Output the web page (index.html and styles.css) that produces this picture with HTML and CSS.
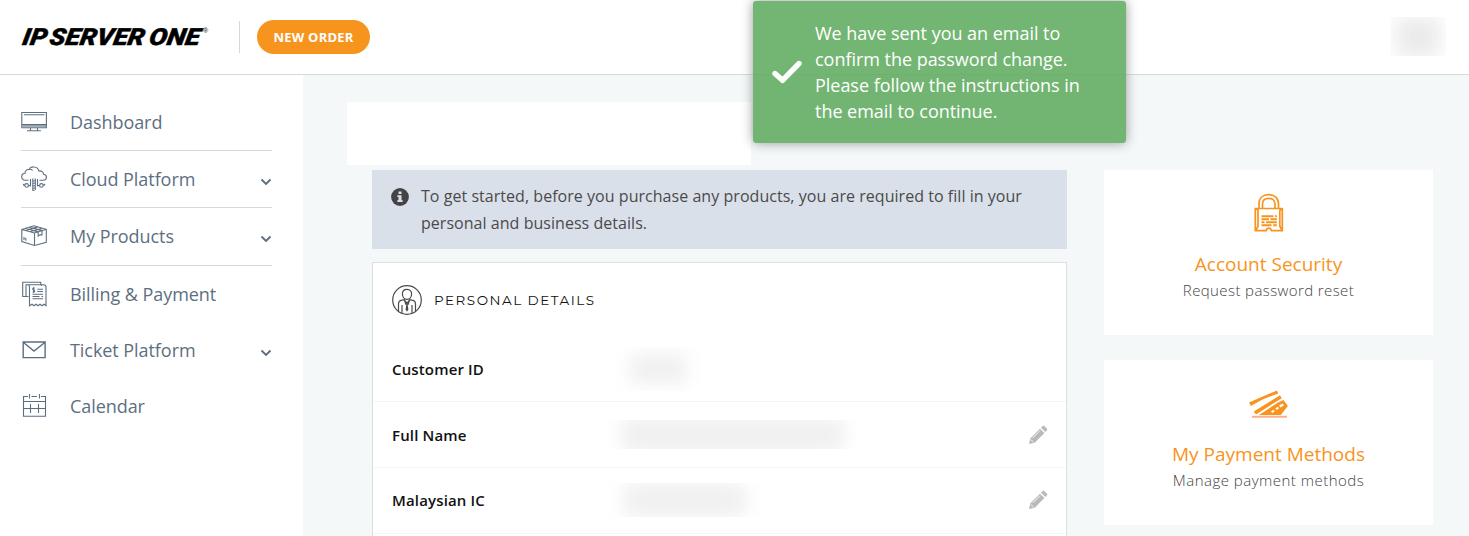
FILE: index.html
```html
<!DOCTYPE html>
<html lang="en">
<head>
<meta charset="utf-8">
<title>IP ServerOne - Profile</title>
<link rel="stylesheet" href="styles.css">
</head>
<body>
<header class="topbar">
  <svg class="logo" width="190" height="24" viewBox="0 0 190 24" aria-label="IP ServerOne">
    <g class="logo-text" transform="translate(0 19.700) skewX(-10)">
      <text x="1.500" y="0" textLength="24.500" lengthAdjust="spacingAndGlyphs">IP</text>
      <text x="28.500" y="0" textLength="95" lengthAdjust="spacingAndGlyphs">SERVER</text>
      <text x="128" y="0" textLength="51" lengthAdjust="spacingAndGlyphs">ONE</text>
    </g>
    <text class="logo-mark" x="183" y="7.500">®</text>
  </svg>
  <a class="new-order"><span>NEW ORDER</span></a>
  <div class="redacted redacted-user"><i></i></div>
</header>
<div class="layout">
  <nav class="sidebar">
    <a class="nav-item ruled">
      <svg class="nav-icon" width="26" height="26" viewBox="0 0 26 26"><path d="M.8 3.500h24.600v15.300H.8zM3 5.800h20.500M1 15.600h24.500M9.500 19v2.500M16.500 19v2.500M6 21.700h14"/><path class="faint" d="M1.500 17h23.500"/></svg>
      <span class="label">Dashboard</span>
    </a>
    <a class="nav-item ruled">
      <svg class="nav-icon cloud" width="26" height="26" viewBox="0 0 26 26"><path d="M7.500 14.200H4.600C2 14 .5 12.600.7 10.500c.2-2 1.600-3.300 3.300-3.200C4 4.700 5.800 3.200 8 3.500c1-2 3-2.800 5-2.500 2.600.2 4.500 1.900 4.800 4 2.700-.6 4.700 1.100 4.700 3.200 1.800.3 3.100 1.600 2.900 3.300-.2 1.800-1.700 2.700-3.400 2.700H18.500M8 3.500c1.500-.5 2.700 0 3.600 1M7.500 19.600h2V13M18.500 19.600h-2V13"/><circle cx="5.600" cy="19.400" r="1.800"/><circle cx="20.400" cy="19.400" r="1.800"/><circle cx="2.800" cy="18.700" r=".4"/><circle cx="23.300" cy="18.700" r=".4"/><path d="M11.800 12.500V25M14.300 12.500V24"/><path class="thick" stroke-dasharray="1.500 1" d="M13 14v11"/></svg>
      <span class="label">Cloud Platform</span>
      <svg class="chevron" width="12" height="8" viewBox="0 0 12 8"><path d="M1.500 1.500 6 6l4.500-4.500"/></svg>
    </a>
    <a class="nav-item ruled tall">
      <svg class="nav-icon" width="26" height="26" viewBox="0 0 26 26"><path d="M.8 6.500 13 2.800l12.300 3.500v13L13.500 22.500.8 18.500zM.8 6.500 13.500 10l11.800-3.700M13.500 10v12.500M4.500 5.300l12.500 3.600M8.500 4.100l12.500 3.500M4.500 7.500l12.300-3.600M9 8.700l12.300-3.500M17.200 9v4l2-1.300 1.800.2V7.700"/><path d="M3 14v3M4.800 14.700v3"/></svg>
      <span class="label">My Products</span>
      <svg class="chevron" width="12" height="8" viewBox="0 0 12 8"><path d="M1.500 1.500 6 6l4.500-4.500"/></svg>
    </a>
    <a class="nav-item">
      <svg class="nav-icon" width="26" height="26" viewBox="0 0 26 26"><path d="M7.500 15.500H5V3.700h15.500V5M5 15.500H1.700V1.200h18v2M8.500 24.700V6c0-1.300-.5-2-1.600-2.300H22.500c1.500 0 2.500.8 2.500 2.300v18.700l-2-1.500-2 1.500-2-1.500-2 1.500-2-1.500-2 1.500-2-1.500z"/><path d="M13.700 7.200c-2-.6-2.700 1.400-1 1.900s1.200 2.400-1 1.800M12.700 6v6M16.200 8.200h5.800M16.200 10.500h5.800M11.500 13.300h10.500M11.500 15.500h7M20.500 15.500H22M11.500 17.700h10.500"/></svg>
      <span class="label">Billing &amp; Payment</span>
    </a>
    <a class="nav-item">
      <svg class="nav-icon" width="26" height="26" viewBox="0 0 26 26"><path class="medium" d="M2.200 5h21.900v15.600H2.200zM2.500 5.500 13 14 23.800 5.500"/></svg>
      <span class="label">Ticket Platform</span>
      <svg class="chevron" width="12" height="8" viewBox="0 0 12 8"><path d="M1.500 1.500 6 6l4.500-4.500"/></svg>
    </a>
    <a class="nav-item">
      <svg class="nav-icon" width="26" height="26" viewBox="0 0 26 26"><path d="M7 3.500H2.500v19.800h22V3.500H20M10.500 3.500H16M2.300 8.500h22.200M2.300 15.500h22.200M8.500 1v4.500M18.500 1v4.500M9.500 11v9M17.500 11v9"/></svg>
      <span class="label">Calendar</span>
    </a>
  </nav>
  <main class="content">
    <div class="heading-block"></div>
    <div class="columns">
      <div class="primary">
        <div class="notice">
          <svg class="info" width="18" height="18" viewBox="0 0 18 18"><circle cx="9" cy="9" r="8.900"/><path d="M7.500 3.500h3v2.600h-3zM6.300 7.200h4.200v5h1.200v1.900H6.300v-1.900h1.200V9.100H6.300z"/></svg>
          <p>To get started, before you purchase any products, you are required to fill in your<br>personal and business details.</p>
        </div>
        <section class="details">
          <div class="details-head">
            <svg class="person" width="30" height="30" viewBox="0 0 30 30"><circle cx="15" cy="15" r="14.300"/><path d="M15 4.300c-3 0-4.600 2-4.600 4.700 0 3 2 5.300 4.600 5.300s4.600-2.300 4.600-5.300c0-2.700-1.600-4.700-4.600-4.700zM6.500 26v-7c0-2.300 1.300-3.400 3.300-3.800l2.400-.6L15 18.300l2.800-3.700 2.400.6c2 .4 3.300 1.500 3.300 3.800v7M10 20v8M20 20v8M12.200 14.600 14.200 20M17.800 14.600 15.800 20"/><path class="tie" d="m14.500 18.500-.9 6L15 26.700l1.400-2.200-.9-6z"/></svg>
            <h2>PERSONAL DETAILS</h2>
          </div>
          <div class="row"><span class="key">Customer ID</span><div class="redacted redacted-id"><i></i></div></div>
          <div class="row"><span class="key">Full Name</span><div class="redacted redacted-name"><i></i></div>
            <svg class="pencil" width="20" height="20" viewBox="0 0 20 20"><path d="m1 19 1.400-5.700L12 3.700l4.400 4.400-9.700 9.600zM13 2.700l1.500-1.400c.7-.6 1.400-.6 2 0l2.300 2.300c.6.600.6 1.300 0 2l-1.400 1.500z"/><path class="cut" d="M4.800 12.800 12 5.600M2.800 14.500l2.700 2.700"/></svg></div>
          <div class="row last"><span class="key">Malaysian IC</span><div class="redacted redacted-ic"><i></i></div>
            <svg class="pencil" width="20" height="20" viewBox="0 0 20 20"><path d="m1 19 1.400-5.700L12 3.700l4.400 4.400-9.700 9.600zM13 2.700l1.500-1.400c.7-.6 1.400-.6 2 0l2.300 2.300c.6.600.6 1.300 0 2l-1.400 1.500z"/><path class="cut" d="M4.800 12.800 12 5.600M2.800 14.500l2.700 2.700"/></svg></div>
        </section>
      </div>
      <aside class="shortcuts">
        <a class="shortcut">
          <svg width="40" height="40" viewBox="0 0 40 40"><g class="lock"><path d="M10 16v-4.500C10 6 14 2.700 19.700 2.700S29.500 6 29.500 11.500V16M13.500 16v-4c0-3.500 2.500-5.700 6.200-5.700S26 8.500 26 12v4M6.300 16.500h27v22.200H22.500c-.4-1.700-1.400-2.500-2.700-2.500s-2.300.8-2.700 2.500H6.300zM9 18.500v15.800L7 38M30.800 18.500v15.800l2.200 3.700M7 16.500l2.500 2M33 16.500l-2.500 2"/><path class="code" d="M12.500 24.300h12M26 24.300h1.800M12.500 27.200h7.500M21.500 27.200h6.300M12.500 30.200h3M17 30.200h10.800M12.500 33.200h10M24.200 33.200h3.600"/></g></svg>
          <strong class="t-security">Account Security</strong>
          <span class="s-security">Request password reset</span>
        </a>
        <a class="shortcut">
          <svg width="40" height="40" viewBox="0 0 40 40"><path class="solid" d="M0 20.500 27.800 8.500l1.500 3L14 17.200 1.800 24zM4.800 29.500 31 13.200l1.700 3L7 32.500zM10 33l19-12.500 5.500-2.500 4.400 6-7.100 9z"/><path class="chips" d="m22 29.400 2.300-1.600 1.500 1.500-2.300 1.600zM26.300 26.400l2.300-1.600 1.500 1.500-2.300 1.600zM30 23.600l3.500-2 1.500 1.600-3.500 2.200z"/><path class="base" d="M3 34.700h35"/></svg>
          <strong class="t-payment">My Payment Methods</strong>
          <span class="s-payment">Manage payment methods</span>
        </a>
      </aside>
    </div>
  </main>
</div>
<div class="toast">
  <svg width="32" height="26" viewBox="0 0 32 26"><path d="M4 14.500 11.500 21.300 28 4.500"/></svg>
  <p>We have sent you an email to<br>confirm the password change.<br>Please follow the instructions in<br>the email to continue.</p>
</div>
</body>
</html>
```
FILE: styles.css
```css
* { box-sizing: border-box; }
html, body { height: 100%; overflow: hidden; }
body { margin: 0; background: #fff; font-family: "Open Sans", "Noto Sans", sans-serif; color: #4a4a4a; }
p, h2 { margin: 0; }
svg { display: block; flex: none; fill: none; }

.topbar { display: flex; align-items: center; height: 75px; padding: 0 23px 1px 20px; border-bottom: 1px solid #d6d8d9; background: #fff; }
.logo { overflow: visible; margin-right: 29px; }
.logo-text { fill: #000; stroke: #000; stroke-width: .4; font: italic 900 23.500px Roboto, "Liberation Sans", sans-serif; }
.logo-mark { fill: #444; font: 700 7px "Liberation Sans", sans-serif; }
.new-order { display: flex; align-items: center; height: 32px; padding-left: 17px; color: #fff; font-size: 13px; font-weight: 700; letter-spacing: .2px; border-left: 1px solid #d6d8d9; }
.new-order span { display: flex; flex: none; align-items: center; justify-content: center; width: 113px; height: 34px; border-radius: 17px; background: #f7941d; }

.redacted { overflow: hidden; flex: none; display: flex; align-items: center; justify-content: center; }
.redacted i { display: block; flex: none; background: #f0f0f0; filter: blur(9px); }
.redacted-user { width: 56px; height: 39px; margin-left: auto; }
.redacted-user i { width: 44px; height: 40px; background: #ebebeb; }
.redacted-id { width: 88px; height: 44px; margin-left: 8px; }
.redacted-id i { width: 56px; height: 30px; }
.redacted-name { width: 254px; height: 29px; }
.redacted-name i { width: 222px; height: 36px; }
.redacted-ic { width: 165px; height: 34px; margin-left: -4px; }
.redacted-ic i { width: 122px; height: 34px; }

.layout { display: flex; height: calc(100% - 75px); }
.sidebar { width: 303px; flex: none; padding: 19px 31px 0 21px; background: #fff; }
.nav-item { display: flex; align-items: center; height: 56px; color: #5d6f7f; font-size: 18px; letter-spacing: -.06px; }
.nav-item.ruled { height: 57px; border-bottom: 1px solid #d6d8d9; }
.nav-item.ruled.tall { height: 58px; padding-bottom: 1px; }
.nav-icon { margin-right: 23px; stroke: #5d6f7f; stroke-width: 1.100; }
.nav-icon .faint { opacity: .55; stroke-width: 2; }
.nav-icon .thick { stroke-width: 1.300; }
.nav-icon .medium { stroke-width: 1.400; }
.chevron { margin: 6px 0 0 auto; stroke: #5d6f7f; stroke-width: 1.900; }

.content { flex: 1; padding: 27px 36px 0 44px; background: #f4f8f9; }
.heading-block { width: 404px; height: 63px; margin-bottom: 5px; background: #fff; }
.columns { display: flex; gap: 37px; padding-left: 25px; }
.primary { width: 695px; }
.notice { display: flex; height: 79px; padding: 13px 19px; background: #dae0ea; font-size: 16px; line-height: 27px; letter-spacing: .04px; white-space: nowrap; }
.info { margin: 5px 12px 0 0; fill: #444; }
.info path { fill: #dae0ea; }
.details { height: 274px; overflow: hidden; margin-top: 13px; border: 1px solid #dcdfe0; border-bottom: 0; background: #fff; }
.details-head { display: flex; align-items: center; gap: 12px; height: 73px; padding: 1px 19px 0; }
.person { stroke: #4a4a4a; stroke-width: 1.200; }
.person .tie { fill: #4a4a4a; stroke: none; }
.details h2 { color: #111; font: 400 13.500px Montserrat, "Open Sans", sans-serif; letter-spacing: 1.500px; }
.row { display: flex; align-items: center; height: 66px; padding: 0 18px 0 19px; border-bottom: 1px solid #f5f5f5; }
.row.last { padding-bottom: 2px; }
.key { width: 214px; color: #111; font-size: 15px; font-weight: 600; letter-spacing: .15px; }
.pencil { margin-left: auto; fill: #b9b9b9; }
.pencil .cut { stroke: #fff; stroke-width: .9; fill: none; }

.shortcuts { display: flex; flex-direction: column; gap: 25px; width: 329px; }
.shortcut { display: flex; flex-direction: column; align-items: center; height: 165px; padding-top: 22px; background: #fff; }
.shortcut strong { margin-top: 18px; color: #f7941d; font-size: 19px; font-weight: 400; line-height: 28px; }
.shortcut span { color: #444; font-size: 15px; font-weight: 300; line-height: 24px; letter-spacing: .4px; }
.shortcut .s-payment { letter-spacing: .48px; }
.lock { stroke: #f7941d; stroke-width: 1.700; stroke-linejoin: round; }
.lock .code { stroke-width: 1.900; }
.solid { fill: #f7941d; }
.chips { fill: #fff; }
.base { stroke: #f9b088; stroke-width: 2; }

.toast { position: absolute; left: 753px; top: 1px; display: flex; align-items: center; width: 373px; height: 142px; padding-left: 18px; border-radius: 3px; background: rgba(98, 172, 98, .89); box-shadow: 0 0 12px #999; color: #fff; }
.toast svg { margin-right: 12px; stroke: #fff; stroke-width: 5.400; stroke-linecap: round; stroke-linejoin: round; }
.toast p { font-size: 18px; line-height: 26px; letter-spacing: -.03px; white-space: nowrap; }
```
